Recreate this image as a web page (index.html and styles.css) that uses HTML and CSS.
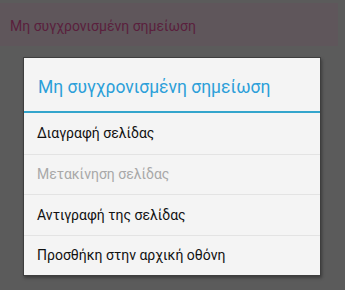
FILE: index.html
```html
<!DOCTYPE html>
<html lang="el">
<head>
<meta charset="utf-8">
<link rel="stylesheet" href="styles.css">
</head>
<body>
<div class="screen">
  <div class="topbar"><span class="topbar-title">Μη συγχρονισμένη σημείωση</span></div>
  <div class="dialog">
    <div class="dialog-title">Μη συγχρονισμένη σημείωση</div>
    <ul class="menu">
      <li class="item">Διαγραφή σελίδας</li>
      <li class="item disabled">Μετακίνηση σελίδας</li>
      <li class="item">Αντιγραφή της σελίδας</li>
      <li class="item">Προσθήκη στην αρχική οθόνη</li>
    </ul>
  </div>
</div>
</body>
</html>
```
FILE: styles.css
```css
html, body {
  margin: 0;
  padding: 0;
}
body {
  width: 345px;
  height: 290px;
  background: #5b5b5b;
  font-family: Roboto, "Noto Sans", sans-serif;
  overflow: hidden;
}
.screen {
  padding-top: 3px;
  display: flex;
  flex-direction: column;
  align-items: flex-start;
}
.topbar {
  width: 338px;
  height: 43px;
  background: #5f565b;
  display: flex;
  align-items: center;
  padding-left: 10px;
  padding-top: 2px;
  box-sizing: border-box;
}
.topbar-title {
  color: #5a1f3d;
  font-size: 14px;
}
.dialog {
  margin-top: 11px;
  margin-left: 23px;
  width: 298px;
  background: #f4f4f4;
  border: 1px solid #3e3e3e;
  box-sizing: border-box;
  box-shadow: 1px 2px 3px rgba(0,0,0,0.35);
}
.dialog-title {
  height: 55px;
  display: flex;
  align-items: center;
  padding-left: 14px;
  padding-top: 4px;
  box-sizing: border-box;
  color: #2b9fd9;
  font-size: 17.5px;
  border-bottom: 2px solid #33a5cc;
}
.menu {
  list-style: none;
  margin: 0;
  padding: 0;
}
.item {
  height: 40.5px;
  display: flex;
  align-items: center;
  padding-left: 13px;
  font-size: 14px;
  color: #111;
  border-top: 1px solid #e3e3e3;
  box-sizing: border-box;
}
.item:first-child {
  border-top: none;
}
.item.disabled {
  color: #a8a8a8;
}
```
